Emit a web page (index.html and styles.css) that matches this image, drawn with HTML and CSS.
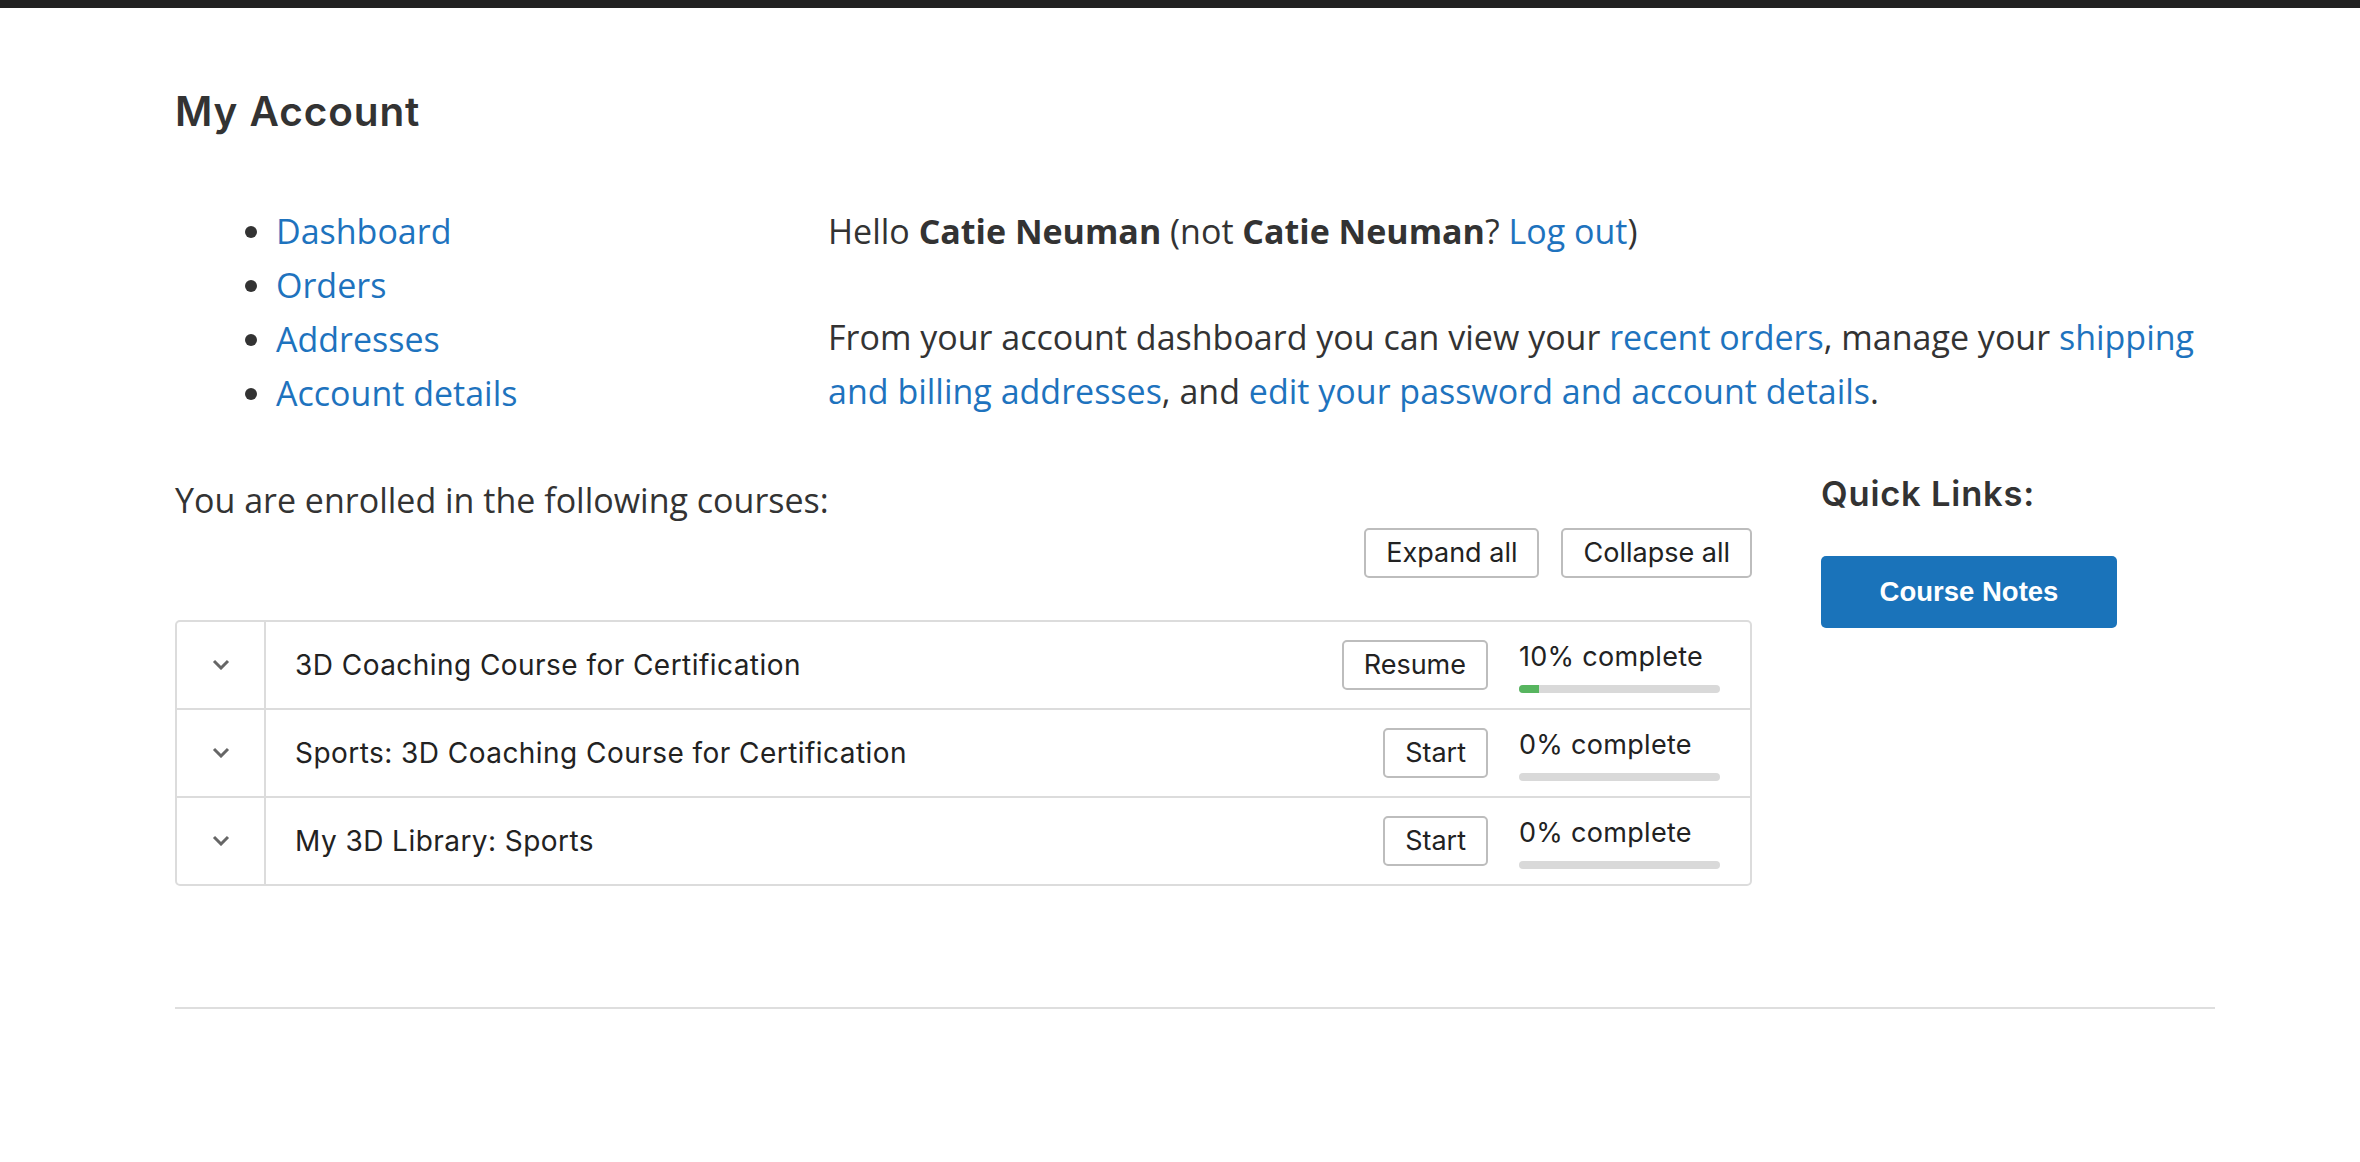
FILE: index.html
```html
<!DOCTYPE html>
<html lang="en">
<head>
<meta charset="utf-8">
<title>My Account</title>
<link rel="stylesheet" href="styles.css">
</head>
<body>
<div class="topbar"></div>
<main class="page">
  <h1 class="page-title">My Account</h1>

  <div class="account">
    <nav class="account-nav">
      <ul>
        <li><a href="#">Dashboard</a></li>
        <li><a href="#">Orders</a></li>
        <li><a href="#">Addresses</a></li>
        <li><a href="#">Account details</a></li>
      </ul>
    </nav>
    <div class="account-content">
      <p>Hello <strong>Catie Neuman</strong> (not <strong>Catie Neuman</strong>? <a href="#">Log out</a>)</p>
      <p>From your account dashboard you can view your <a href="#">recent orders</a>, manage your <a href="#">shipping and billing addresses</a>, and <a href="#">edit your password and account details</a>.</p>
    </div>
  </div>

  <div class="lower">
    <section class="courses">
      <p class="enrolled">You are enrolled in the following courses:</p>
      <div class="toolbar">
        <button class="btn">Expand all</button>
        <button class="btn">Collapse all</button>
      </div>
      <div class="course-list">
        <div class="course">
          <div class="toggle"><svg width="18" height="11" viewBox="0 0 18 11"><path d="M2 2 L9 9 L16 2" fill="none" stroke="#666" stroke-width="3"/></svg></div>
          <div class="title">3D Coaching Course for Certification</div>
          <button class="btn">Resume</button>
          <div class="progress">
            <div class="progress-label">10% complete</div>
            <div class="bar"><div class="fill" style="width:10%"></div></div>
          </div>
        </div>
        <div class="course">
          <div class="toggle"><svg width="18" height="11" viewBox="0 0 18 11"><path d="M2 2 L9 9 L16 2" fill="none" stroke="#666" stroke-width="3"/></svg></div>
          <div class="title">Sports: 3D Coaching Course for Certification</div>
          <button class="btn">Start</button>
          <div class="progress">
            <div class="progress-label">0% complete</div>
            <div class="bar"><div class="fill" style="width:0%"></div></div>
          </div>
        </div>
        <div class="course">
          <div class="toggle"><svg width="18" height="11" viewBox="0 0 18 11"><path d="M2 2 L9 9 L16 2" fill="none" stroke="#666" stroke-width="3"/></svg></div>
          <div class="title">My 3D Library: Sports</div>
          <button class="btn">Start</button>
          <div class="progress">
            <div class="progress-label">0% complete</div>
            <div class="bar"><div class="fill" style="width:0%"></div></div>
          </div>
        </div>
      </div>
    </section>

    <aside class="quick">
      <h3 class="quick-title">Quick Links:</h3>
      <a class="notes-btn" href="#">Course Notes</a>
    </aside>
  </div>

  <hr class="divider">
</main>
</body>
</html>
```

FILE: styles.css
```css
html, body {
  margin: 0;
  padding: 0;
  background: #fff;
}

body {
  font-family: "Open Sans", "Noto Sans", sans-serif;
  font-size: 34px;
  line-height: 54px;
  color: #333;
}

a {
  color: #1e73be;
  text-decoration: none;
}

.topbar {
  height: 8px;
  background: #222;
}

.page {
  width: 2040px;
  padding-left: 175px;
}

.page-title {
  margin: 80px 0 0;
  font-family: Inter, "Liberation Sans", sans-serif;
  font-weight: 600;
  font-size: 40.5px;
  line-height: 48.6px;
  letter-spacing: 0.9px;
  color: #333;
}

.account {
  display: flex;
  margin-top: 67.4px;
}

.account-nav {
  width: 653px;
  flex: none;
}

.account-nav ul {
  margin: 0;
  padding-left: 101px;
}

.account-content {
  flex: 1;
}

.account-content p {
  margin: 0 0 52px;
}

.account-content p:last-child {
  margin-bottom: 0;
}

.lower {
  display: grid;
  grid-template-columns: 1577px 394px;
  column-gap: 69px;
  margin-top: 53px;
}

.enrolled {
  margin: 0;
}

.toolbar {
  display: flex;
  justify-content: flex-end;
  gap: 22px;
  margin-top: 1px;
}

.btn {
  height: 50px;
  padding: 0 20px;
  border: 2px solid #bdbdbd;
  border-radius: 5px;
  background: #fff;
  font-family: Inter, "Liberation Sans", sans-serif;
  font-size: 27px;
  color: #222;
  cursor: pointer;
}

.course-list {
  margin-top: 42px;
  border: 2px solid #dcdcdc;
  border-radius: 5px;
}

.course {
  display: flex;
  align-items: center;
  height: 86px;
  padding-right: 30px;
}

.course + .course {
  border-top: 2px solid #dcdcdc;
}

.toggle {
  width: 87px;
  height: 100%;
  flex: none;
  display: flex;
  align-items: center;
  justify-content: center;
  border-right: 2px solid #dcdcdc;
}

.title {
  flex: 1;
  padding-left: 29px;
  font-family: Inter, "Liberation Sans", sans-serif;
  font-size: 28px;
  letter-spacing: 0.45px;
  color: #222;
}

.progress {
  width: 201px;
  margin-left: 31px;
  padding-top: 5px;
}

.progress-label {
  font-family: Inter, "Liberation Sans", sans-serif;
  font-size: 27px;
  line-height: 31px;
  letter-spacing: 0.3px;
  color: #222;
  white-space: nowrap;
}

.bar {
  margin-top: 13px;
  height: 8px;
  border-radius: 4px;
  background: #d9d9d9;
  overflow: hidden;
}

.fill {
  height: 100%;
  background: #57b55f;
}

.quick-title {
  margin: 0;
  font-family: Inter, "Liberation Sans", sans-serif;
  font-weight: 600;
  font-size: 34.5px;
  line-height: 41.4px;
  letter-spacing: 0.8px;
  color: #333;
}

.notes-btn {
  display: flex;
  align-items: center;
  justify-content: center;
  width: 296px;
  height: 72px;
  margin-top: 42px;
  border-radius: 5px;
  background: #1a73ba;
  color: #fff;
  font-family: "Liberation Sans", Arial, sans-serif;
  font-weight: bold;
  font-size: 27.5px;
}

.divider {
  margin: 121px 0 0;
  border: 0;
  border-top: 2px solid #dedede;
  height: 0;
}
```
